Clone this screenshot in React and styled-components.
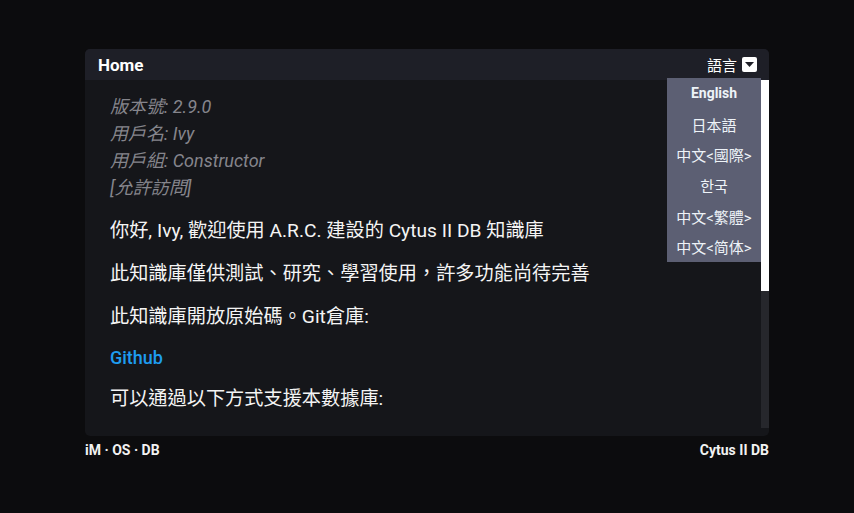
import React, { useState } from 'react';
import styled, { createGlobalStyle } from 'styled-components';

const GlobalStyle = createGlobalStyle`
  html, body {
    margin: 0;
    padding: 0;
    background: #0c0c0e;
    font-family: Roboto, "Noto Sans CJK TC", sans-serif;
    color: #f2f2f2;
  }
`;

const Page = styled.div`
  width: 684px;
  margin: 0 auto;
  padding-top: 49px;
`;

const Card = styled.section`
  position: relative;
  background: #15161a;
  border-radius: 5px;
  padding-bottom: 8px;
`;

const Header = styled.header`
  height: 31px;
  background: #1e1f27;
  border-radius: 5px 5px 0 0;
  display: flex;
  align-items: center;
  justify-content: space-between;
  padding: 0 12px 0 13px;
`;

const Title = styled.h1`
  margin: 0;
  font-size: 17px;
  font-weight: 700;
  color: #fff;
`;

const LangToggle = styled.div`
  display: flex;
  align-items: center;
  gap: 5px;
  font-size: 15px;
  color: #fff;
  cursor: pointer;
`;

const Caret = styled.span`
  width: 15px;
  height: 15px;
  background: #fff;
  border-radius: 2px;
  display: flex;
  align-items: center;
  justify-content: center;
`;

const Menu = styled.ul`
  position: absolute;
  top: 29px;
  right: 8px;
  width: 94px;
  margin: 0;
  padding: 0;
  list-style: none;
  background: #5c5f73;
  z-index: 2;
`;

const MenuItem = styled.li`
  height: 30.7px;
  display: flex;
  align-items: center;
  justify-content: center;
  font-size: ${p => (p.bold ? '14px' : '15px')};
  font-weight: ${p => (p.bold ? 700 : 400)};
  color: #eef3f8;
  white-space: nowrap;
`;

const BodyRow = styled.div`
  height: 348px;
  display: flex;
`;

const Content = styled.div`
  flex: 1;
  overflow: hidden;
  padding: 13px 25px 0;
`;

const ScrollTrack = styled.div`
  width: 8px;
  background: #26272c;
  display: flex;
  flex-direction: column;
`;

const ScrollThumb = styled.div`
  background: #fff;
`;

const Meta = styled.div`
  font-style: italic;
  font-size: 18px;
  line-height: 27px;
  color: #85858c;
`;

const Para = styled.p`
  margin: 16px 0 0;
  font-size: 19.2px;
  line-height: ${p => (p.tight ? '23px' : '27px')};
  color: #f4f4f4;
`;

const Link = styled.a`
  color: #1e9cf0;
  font-size: 18px;
  font-weight: 500;
  text-decoration: none;
`;

const Footer = styled.footer`
  height: 28px;
  display: flex;
  align-items: center;
  justify-content: space-between;
  font-size: 14px;
  font-weight: 700;
  color: #f2f2f2;
`;

const languages = [
  { label: 'English', bold: true },
  { label: '日本語' },
  { label: '中文<國際>' },
  { label: '한국' },
  { label: '中文<繁體>' },
  { label: '中文<简体>' },
];

export default function App() {
  const [open] = useState(true);
  const thumbRatio = 0.606;
  return (
    <>
      <GlobalStyle />
      <Page>
        <Card>
          <Header>
            <Title>Home</Title>
            <LangToggle>
              語言
              <Caret>
                <svg width="9" height="5" viewBox="0 0 9 5">
                  <path d="M0 0h9L4.5 5z" fill="#1e1f27" />
                </svg>
              </Caret>
            </LangToggle>
          </Header>
          {open && (
            <Menu>
              {languages.map(l => (
                <MenuItem key={l.label} bold={l.bold}>
                  {l.label}
                </MenuItem>
              ))}
            </Menu>
          )}
          <BodyRow>
            <Content>
              <Meta>
                <div>版本號: 2.9.0</div>
                <div>用戶名: Ivy</div>
                <div>用戶組: Constructor</div>
                <div>[允許訪問]</div>
              </Meta>
              <Para>你好, Ivy, 歡迎使用 A.R.C. 建設的 Cytus II DB 知識庫</Para>
              <Para>此知識庫僅供測試、研究、學習使用，許多功能尚待完善</Para>
              <Para>此知識庫開放原始碼。Git倉庫:</Para>
              <Para tight>
                <Link href="#">Github</Link>
              </Para>
              <Para>可以通過以下方式支援本數據庫:</Para>
            </Content>
            <ScrollTrack>
              <ScrollThumb style={{ height: `${thumbRatio * 100}%` }} />
            </ScrollTrack>
          </BodyRow>
        </Card>
        <Footer>
          <span>iM · OS · DB</span>
          <span>Cytus II DB</span>
        </Footer>
      </Page>
    </>
  );
}
